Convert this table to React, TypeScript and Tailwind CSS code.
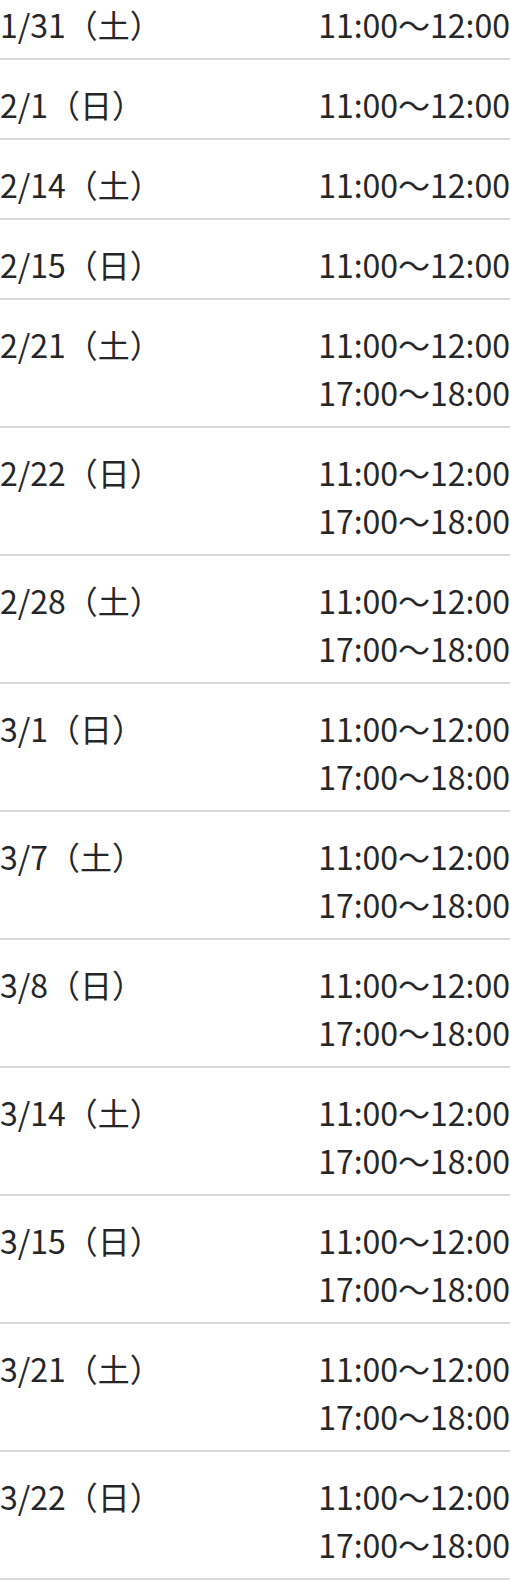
const rows: { date: string; times: string[] }[] = [
  { date: "1/31（土）", times: ["11:00〜12:00"] },
  { date: "2/1（日）", times: ["11:00〜12:00"] },
  { date: "2/14（土）", times: ["11:00〜12:00"] },
  { date: "2/15（日）", times: ["11:00〜12:00"] },
  { date: "2/21（土）", times: ["11:00〜12:00", "17:00〜18:00"] },
  { date: "2/22（日）", times: ["11:00〜12:00", "17:00〜18:00"] },
  { date: "2/28（土）", times: ["11:00〜12:00", "17:00〜18:00"] },
  { date: "3/1（日）", times: ["11:00〜12:00", "17:00〜18:00"] },
  { date: "3/7（土）", times: ["11:00〜12:00", "17:00〜18:00"] },
  { date: "3/8（日）", times: ["11:00〜12:00", "17:00〜18:00"] },
  { date: "3/14（土）", times: ["11:00〜12:00", "17:00〜18:00"] },
  { date: "3/15（日）", times: ["11:00〜12:00", "17:00〜18:00"] },
  { date: "3/21（土）", times: ["11:00〜12:00", "17:00〜18:00"] },
  { date: "3/22（日）", times: ["11:00〜12:00", "17:00〜18:00"] },
];

export default function App() {
  return (
    <div className="w-[510px] bg-white font-['Noto_Sans_CJK_JP',sans-serif] text-[32px] leading-[48px] text-[#262626]">
      {rows.map((row) => (
        <div
          key={row.date}
          className="flex justify-between border-b-2 border-[#d9d9d9] pt-5 pb-2.5 first:pt-0"
        >
          <div>{row.date}</div>
          <div className="text-right">
            {row.times.map((t) => (
              <div key={t}>{t}</div>
            ))}
          </div>
        </div>
      ))}
    </div>
  );
}
